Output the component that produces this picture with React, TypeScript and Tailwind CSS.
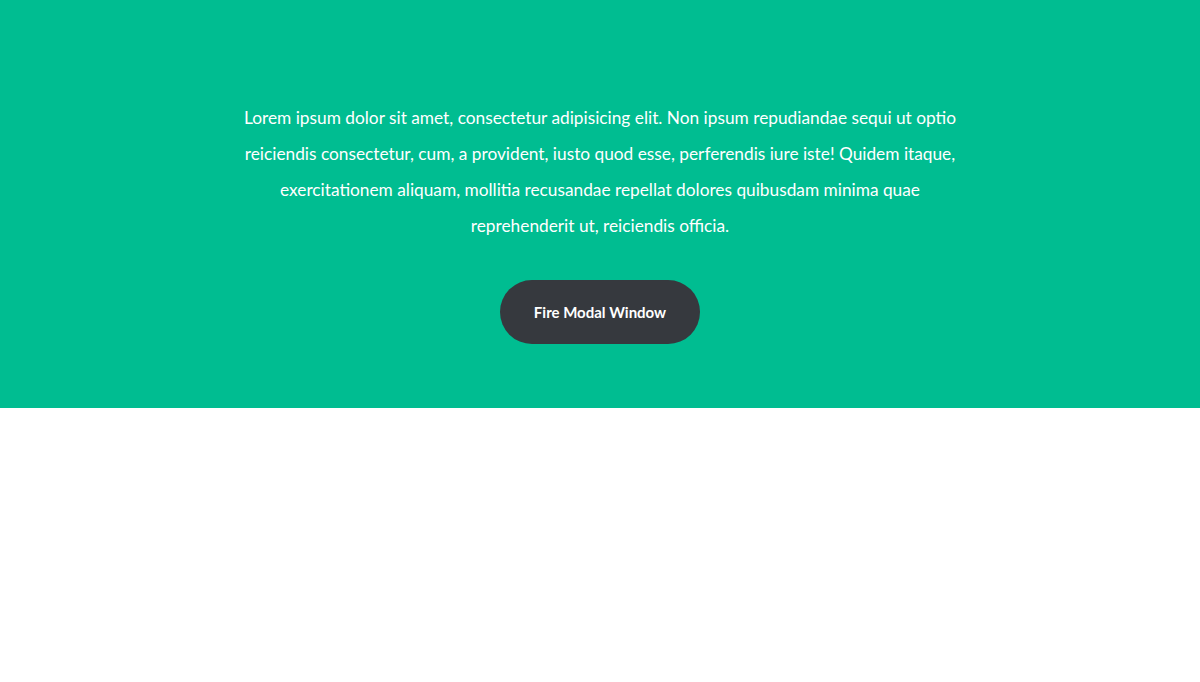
export default function App() {
  return (
    <div className="min-h-screen bg-white" style={{ fontFamily: 'Lato, "Open Sans", sans-serif' }}>
      <section className="bg-[#00bd91] pt-[100px] pb-[64px] flex flex-col items-center">
        <p className="w-[730px] text-center text-white text-[17.3px] leading-[36px]">
          Lorem ipsum dolor sit amet, consectetur adipisicing elit. Non ipsum repudiandae sequi ut optio
          reiciendis consectetur, cum, a provident, iusto quod esse, perferendis iure iste! Quidem itaque,
          exercitationem aliquam, mollitia recusandae repellat dolores quibusdam minima quae
          reprehenderit ut, reiciendis officia.
        </p>
        <button className="mt-[36px] w-[200px] h-[64px] rounded-full bg-[#36393e] text-white text-[15px] font-bold">
          Fire Modal Window
        </button>
      </section>
    </div>
  );
}
